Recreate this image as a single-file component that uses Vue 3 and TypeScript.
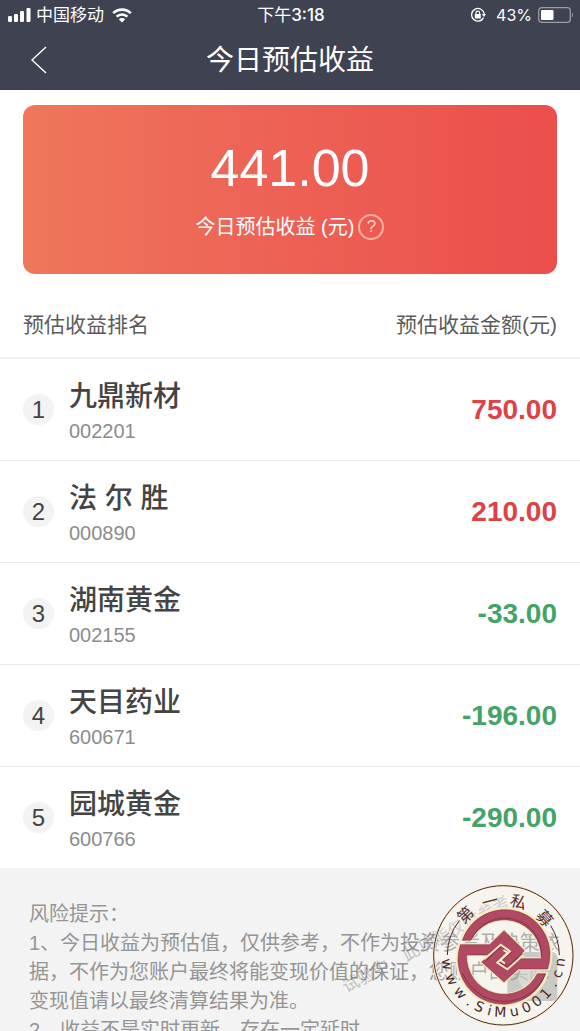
<script setup lang="ts">
interface Stock {
  name: string
  code: string
  amount: string
}

const stocks: Stock[] = [
  { name: '九鼎新材', code: '002201', amount: '750.00' },
  { name: '法 尔 胜', code: '000890', amount: '210.00' },
  { name: '湖南黄金', code: '002155', amount: '-33.00' },
  { name: '天目药业', code: '600671', amount: '-196.00' },
  { name: '园城黄金', code: '600766', amount: '-290.00' },
]

const notes: string[] = [
  '风险提示：',
  '1、今日收益为预估值，仅供参考，不作为投资参考及决策依',
  '据，不作为您账户最终将能变现价值的保证，您账户的实际',
  '变现值请以最终清算结果为准。',
  '2、收益不是实时更新，存在一定延时',
]

interface Glyph {
  char: string
  angle: number
}

const sealTop: Glyph[] = [
  { char: '第', angle: -43 },
  { char: '一', angle: -14 },
  { char: '私', angle: 16 },
  { char: '募', angle: 48 },
]

const sealBottom: Glyph[] = [
  { char: 'w', angle: 81 },
  { char: 'w', angle: 65 },
  { char: 'w', angle: 49 },
  { char: '.', angle: 36 },
  { char: 'S', angle: 25 },
  { char: 'i', angle: 14 },
  { char: 'M', angle: 3 },
  { char: 'u', angle: -11 },
  { char: '0', angle: -24 },
  { char: '0', angle: -36 },
  { char: '1', angle: -48 },
  { char: '.', angle: -60 },
  { char: 'c', angle: -71 },
  { char: 'n', angle: -83 },
]
</script>

<template>
  <div class="app">
    <header class="top">
      <div class="status">
        <div class="status-side">
          <svg class="signal" viewBox="0 0 24 14" aria-hidden="true">
            <rect x="0" y="8" width="4" height="6" rx="1.2" />
            <rect x="6" y="6" width="4" height="8" rx="1.2" />
            <rect x="12" y="3" width="4" height="11" rx="1.2" />
            <rect x="18.500" y="0" width="4" height="14" rx="1.2" />
          </svg>
          <span>中国移动</span>
          <svg class="wifi" viewBox="0 0 20 15" aria-hidden="true">
            <path d="M1.200 5.200A12.500 12.500 0 0 1 18.800 5.200" />
            <path d="M4.600 8.700A7.600 7.600 0 0 1 15.400 8.700" />
            <path class="solid" d="M10 14.500L6.800 11.200A4.600 4.600 0 0 1 13.200 11.200Z" />
          </svg>
        </div>
        <time class="clock">下午<b>3:18</b></time>
        <div class="status-side right">
          <svg class="lock" viewBox="0 0 16 16" aria-hidden="true">
            <path d="M13.600 10.600A6.300 6.300 0 1 1 14.200 7" />
            <path class="solid" d="M11.800 7H16L14 10Z" />
            <rect class="solid" x="4.800" y="7" width="6" height="4.500" rx="0.600" />
            <path d="M6 7.500V6a1.800 1.800 0 0 1 3.600 0V7.500" />
          </svg>
          <span class="percent">43%</span>
          <svg class="battery" viewBox="0 0 36 16" aria-hidden="true">
            <rect class="shell" x="0.700" y="0.700" width="31.600" height="14.600" rx="3" />
            <rect class="charge" x="3" y="3" width="12.500" height="10" rx="1" />
            <path class="cap" d="M34 5.500Q36 8 34 10.500Z" />
          </svg>
        </div>
      </div>
      <div class="nav">
        <button class="back" type="button" aria-label="返回">
          <svg viewBox="0 0 16 28" aria-hidden="true"><path d="M15 1L1 14L15 27" /></svg>
        </button>
        <h1>今日预估收益</h1>
      </div>
    </header>

    <main>
      <section class="card">
        <strong class="total">441.00</strong>
        <div class="caption">
          <span>今日预估收益 (元)</span>
          <button class="help" type="button" aria-label="说明">?</button>
        </div>
      </section>

      <table>
        <thead>
          <tr>
            <th colspan="2" scope="col">预估收益排名</th>
            <th class="amount" scope="col">预估收益金额(元)</th>
          </tr>
        </thead>
        <tbody>
          <tr v-for="(stock, index) in stocks" :key="stock.code">
            <td class="rank"><span>{{ index + 1 }}</span></td>
            <td>
              <div class="name">{{ stock.name }}</div>
              <div class="code">{{ stock.code }}</div>
            </td>
            <td class="amount" :class="stock.amount.startsWith('-') ? 'loss' : 'gain'">{{ stock.amount }}</td>
          </tr>
        </tbody>
      </table>

      <section class="notes">
        <p v-for="line in notes" :key="line">{{ line }}</p>
      </section>
    </main>

    <div class="stamp" aria-hidden="true">试验中，此功能仅供参考</div>

    <svg class="seal" viewBox="0 0 450 450" role="img" aria-label="第一私募 www.SiMu001.cn">
      <circle cx="220" cy="226" r="209" fill="#fbf6e3" fill-opacity="0.25" stroke="#f8efd3" stroke-width="8" />
      <circle cx="220" cy="226" r="209" fill="none" stroke="#4b2923" stroke-width="3" />
      <rect x="232" y="216" width="150" height="147" rx="16" fill="#8c8c8c" fill-opacity="0.42" />
      <circle cx="307" cy="290" r="42" fill="#f3f3ee" fill-opacity="0.4" />
      <g fill="none" stroke="#4b2923" stroke-width="3">
        <path d="M52 225A168 168 0 0 1 88 122" />
        <path d="M388 225A168 168 0 0 0 362 137" />
      </g>

      <g transform="translate(75 84)">
        <g stroke="#f9ebc2" stroke-width="8" fill="none">
          <path d="M18 97A138 138 0 0 1 281 183H190L147 222L80 162L104 141H13V110H104L147 68L208 128L186 152H259A112 112 0 0 0 47 97Z" />
          <path d="M276 197A138 138 0 0 1 13 110L35 141A112 112 0 0 0 247 197Z" />
        </g>
        <path
          fill="#b14962"
          stroke="#702a3a"
          stroke-width="1.500"
          d="M22 97A135 135 0 0 1 278 183H190L147 222L80 162L104 141H35A112 112 0 0 0 247 197H272A135 135 0 0 1 16 110H104L147 68L208 128L186 152H259A112 112 0 0 0 47 97Z"
        />
        <g fill="none" stroke="#6b2636" stroke-opacity="0.6" stroke-width="3">
          <path d="M49 95A110 110 0 0 1 259 148" />
          <path d="M23 196A134 134 0 0 0 271 198" />
        </g>
        <g fill="none" stroke="#6b2636" stroke-opacity="0.6" stroke-width="9">
          <path d="M90 156L137 112L165 132L134 160L151 170" />
          <path d="M204 138L157 182L129 162L158 136" />
        </g>
        <g fill="none" stroke="#f9ebc2" stroke-width="6">
          <path d="M88 154L137 110L165 130L136 157L150 167" />
          <path d="M206 140L157 184L127 164L158 134L145 126" />
        </g>
      </g>

      <g class="seal-top">
        <text
          v-for="glyph in sealTop"
          :key="glyph.char"
          x="220"
          y="77"
          :transform="`rotate(${glyph.angle} 220 226)`"
        >{{ glyph.char }}</text>
      </g>
      <g class="seal-bottom">
        <text
          v-for="(glyph, index) in sealBottom"
          :key="index"
          x="220"
          y="411"
          :transform="`rotate(${glyph.angle} 220 226)`"
        >{{ glyph.char }}</text>
      </g>
    </svg>
  </div>
</template>

<style>
body {
  margin: 0;
}
</style>

<style scoped>
.app {
  position: relative;
  display: flex;
  flex-direction: column;
  height: 100vh;
  overflow: hidden;
  background: #fff;
  color: #444;
  font-family: "Liberation Sans", "Noto Sans CJK SC", sans-serif;
  font-weight: 400;
}

.top {
  flex: none;
  background: #3e4251;
  color: #fff;
}

.status {
  display: grid;
  grid-template-columns: 1fr auto 1fr;
  align-items: center;
  height: 30px;
  padding: 0 6px 0 8px;
  font-family: Inter, "Noto Sans CJK SC", sans-serif;
  font-size: 17px;
  line-height: 30px;
}

.status-side {
  display: flex;
  align-items: center;
  gap: 4px;
}

.status-side.right {
  justify-content: flex-end;
  gap: 6px;
}

.percent {
  font-size: 16px;
}

.clock b {
  font-weight: 500;
}

.signal {
  width: 24px;
  height: 14px;
  fill: #fff;
}

.wifi {
  width: 20px;
  height: 15px;
  margin-left: 4px;
  fill: none;
  stroke: #fff;
  stroke-width: 2.6;
}

.lock {
  width: 16px;
  height: 16px;
  margin-right: 4px;
  fill: none;
  stroke: #fff;
  stroke-width: 1.3;
}

.solid {
  fill: #fff;
  stroke: none;
}

.battery {
  width: 36px;
  height: 16px;
}

.shell {
  fill: none;
  stroke: #9a9ca6;
  stroke-width: 1.3;
}

.charge {
  fill: #fff;
}

.cap {
  fill: #9a9ca6;
}

.nav {
  display: grid;
  grid-template-columns: 56px 1fr 56px;
  align-items: center;
  height: 60px;
}

.back {
  display: flex;
  justify-content: flex-end;
  padding: 0 9px 0 0;
  border: 0;
  background: none;
}

.back svg {
  width: 16px;
  height: 28px;
  fill: none;
  stroke: #fff;
  stroke-width: 1.4;
}

h1 {
  margin: 0;
  padding-top: 2px;
  font-size: 28px;
  font-weight: 400;
  line-height: 58px;
  text-align: center;
}

main {
  display: flex;
  flex: 1;
  flex-direction: column;
  min-height: 0;
  overflow-y: auto;
  scrollbar-width: none;
}

.card {
  flex: none;
  margin: 15px 23px;
  padding: 33px 0 32px;
  border-radius: 12px;
  background: linear-gradient(90deg, #ef775a, #ed6456 42%, #eb4e4b);
  color: #fff;
  text-align: center;
}

.total {
  display: block;
  font-size: 52px;
  font-weight: 400;
  line-height: 60px;
}

.caption {
  display: flex;
  align-items: center;
  justify-content: center;
  gap: 4px;
  margin-top: 14px;
  font-size: 20px;
  line-height: 30px;
}

.help {
  box-sizing: border-box;
  width: 26px;
  height: 26px;
  padding: 0;
  border: 2px solid #f7b0a4;
  border-radius: 50%;
  background: none;
  color: #fbd0c8;
  font: 17px/22px "Liberation Sans", sans-serif;
}

table {
  flex: none;
  width: 100%;
  border-collapse: collapse;
}

th,
td {
  padding: 0;
  text-align: left;
}

th {
  height: 68px;
  border-bottom: 2px solid #f1f1f1;
  color: #5c5c5c;
  font-size: 21px;
  font-weight: 400;
}

th:first-child {
  padding-left: 23px;
}

td {
  height: 101px;
  border-bottom: 1px solid #eaeaea;
}

tbody tr:last-child td {
  border-bottom-color: #f3f3f3;
}

.rank {
  width: 46px;
  padding-left: 23px;
}

.rank span {
  display: block;
  width: 31px;
  height: 31px;
  border-radius: 50%;
  background: #f3f3f3;
  color: #444;
  font-size: 24px;
  line-height: 32px;
  text-align: center;
}

.name {
  padding-top: 2px;
  color: #444;
  font-size: 28px;
  font-weight: 500;
  line-height: 40px;
}

.code {
  color: #8c8c8c;
  font-size: 20px;
  line-height: 28px;
}

.amount {
  padding-right: 23px;
  text-align: right;
}

td.amount {
  font-size: 28px;
  font-weight: 700;
}

.gain {
  color: #dd4245;
}

.loss {
  color: #44a367;
}

.notes {
  flex: 1 0 auto;
  padding: 31px 0 0 29px;
  background: #f3f3f3;
  color: #959595;
  font-size: 20px;
}

.notes p {
  margin: 0;
  line-height: 29px;
  white-space: nowrap;
}

.stamp {
  position: absolute;
  right: 60px;
  bottom: 74px;
  color: #777;
  font-size: 17px;
  line-height: 24px;
  opacity: 0.4;
  transform: rotate(-28deg);
  white-space: nowrap;
}

.seal {
  position: absolute;
  right: 0;
  bottom: 1px;
  width: 150px;
  height: 150px;
}

.seal-top text {
  fill: #5c2c26;
  font-family: "Noto Sans CJK SC", sans-serif;
  font-size: 48px;
  text-anchor: middle;
}

.seal-bottom text {
  fill: #4b2923;
  font-family: "DejaVu Sans", sans-serif;
  font-size: 42px;
  text-anchor: middle;
}
</style>
